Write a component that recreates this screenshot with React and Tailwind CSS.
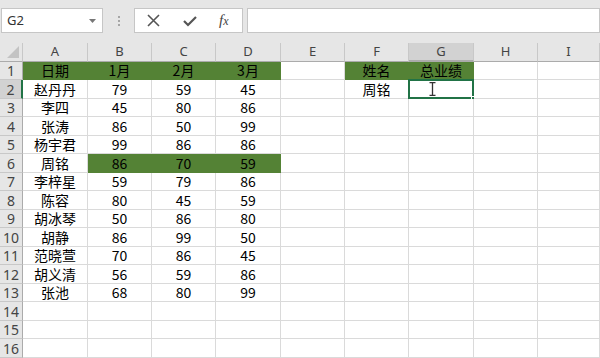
import React from 'react';

const cols = ['', 'A', 'B', 'C', 'D', 'E', 'F', 'G', 'H', 'I'];
const widths = ['w-[23px]', 'w-[65px]', 'w-[64px]', 'w-[64px]', 'w-[65px]', 'w-[64px]', 'w-[64px]', 'w-[65px]', 'w-[64px]', 'flex-1'];

const data = [
    ['日期', '1月', '2月', '3月', '', '姓名', '总业绩'],
    ['赵丹丹', '79', '59', '45', '', '周铭', ''],
    ['李四', '45', '80', '86'],
    ['张涛', '86', '50', '99'],
    ['杨宇君', '99', '86', '86'],
    ['周铭', '86', '70', '59'],
    ['李梓星', '59', '79', '86'],
    ['陈容', '80', '45', '59'],
    ['胡冰琴', '50', '86', '80'],
    ['胡静', '86', '99', '50'],
    ['范晓萱', '70', '86', '45'],
    ['胡义清', '56', '59', '86'],
    ['张池', '68', '80', '99'],
    [], [], [],
];

const isGreen = (r, c) =>
    (r === 0 && c >= 1 && c <= 4) ||
    (r === 0 && (c === 6 || c === 7)) ||
    (r === 5 && c >= 2 && c <= 4);

function Toolbar() {
    return (
        <div className="h-[43px] bg-[#e6e6e6] flex items-start pt-[8px]">
            <div className="w-[102px] h-[25px] bg-white border border-[#c6c6c6] ml-[1px] flex items-center justify-between px-[5px]">
                <span className="text-[13px] text-[#333] font-['Noto_Sans',sans-serif]">G2</span>
                <svg width="7" height="4" viewBox="0 0 7 4" className="mr-[1px]">
                    <path d="M0 0 L7 0 L3.5 4 Z" fill="#777" />
                </svg>
            </div>
            <div className="w-[31px] h-[25px] flex flex-col items-center justify-center gap-[2px]">
                <span className="w-[2px] h-[2px] bg-[#a6a6a6]" />
                <span className="w-[2px] h-[2px] bg-[#a6a6a6]" />
                <span className="w-[2px] h-[2px] bg-[#a6a6a6]" />
            </div>
            <div className="w-[109px] h-[25px] bg-white border border-[#c6c6c6] flex items-center">
                <svg width="13" height="13" viewBox="0 0 13 13" className="ml-[12px]">
                    <path d="M1 1 L12 12 M12 1 L1 12" stroke="#555" strokeWidth="1.6" />
                </svg>
                <svg width="14" height="12" viewBox="0 0 14 12" className="ml-[23px]">
                    <path d="M1 6 L5 10 L13 2" stroke="#555" strokeWidth="2.2" fill="none" />
                </svg>
                <span className="ml-[22px] text-[15px] italic text-[#444] font-['Liberation_Serif',serif] leading-none">
                    f<span className="text-[12px]">x</span>
                </span>
            </div>
            <div className="flex-1 h-[25px] bg-white border border-[#c6c6c6] ml-[4px]" />
        </div>
    );
}

function HeaderRow() {
    return (
        <div className="flex h-[19px] bg-[#e6e6e6]">
            {cols.map((c, i) => (
                <div
                    key={i}
                    className={`${widths[i]} relative flex items-center justify-center text-[13px] text-[#444] font-['Noto_Sans',sans-serif] border-r border-b border-r-[#c8c8c8] border-b-[#ababab] ${i === 7 ? 'bg-[#d2d2d2] border-b-2 border-b-[#217346]' : ''}`}
                >
                    {i === 0 ? (
                        <svg width="12" height="12" viewBox="0 0 12 12" className="absolute right-[3px] bottom-[3px]">
                            <path d="M12 0 L12 12 L0 12 Z" fill="#c3c3c3" />
                        </svg>
                    ) : (
                        c
                    )}
                </div>
            ))}
        </div>
    );
}

function Row({ r }) {
    const cells = data[r] || [];
    const h = r % 2 === 0 ? 'h-[18px]' : 'h-[19px]';
    return (
        <div className={`flex ${h}`}>
            {cols.map((_, i) => {
                if (i === 0) {
                    return (
                        <div
                            key={i}
                            className={`${widths[0]} flex items-center justify-center text-[14px] text-[#444] font-['Noto_Sans',sans-serif] border-b border-b-[#c8c8c8] ${r === 1 ? 'bg-[#d2d2d2] border-r-2 border-r-[#217346]' : 'bg-[#e6e6e6] border-r border-r-[#ababab]'}`}
                        >
                            {r + 1}
                        </div>
                    );
                }
                const green = isGreen(r, i);
                const selected = r === 1 && i === 7;
                return (
                    <div
                        key={i}
                        className={`${widths[i]} relative flex items-center justify-center text-[14px] text-black font-['Noto_Sans_CJK_SC',sans-serif] border-r border-b ${green ? 'bg-[#548235] border-[#548235]' : 'bg-white border-[#dadada]'}`}
                    >
                        {cells[i - 1] || ''}
                        {selected && (
                            <>
                                <div className="absolute -left-px -top-px -right-px -bottom-px border-2 border-[#217346]" />
                                <div className="absolute -right-[3px] -bottom-[3px] w-[5px] h-[5px] bg-[#217346] border border-white" />
                                <svg width="7" height="14" viewBox="0 0 7 14" className="absolute left-[20px] top-[2px]">
                                    <path d="M0.5 0.5 H6.5 M3.5 0.5 V13.5 M0.5 13.5 H6.5" stroke="#333" strokeWidth="1.3" fill="none" />
                                </svg>
                            </>
                        )}
                    </div>
                );
            })}
        </div>
    );
}

export default function App() {
    return (
        <div className="w-[600px] h-[358px] overflow-hidden bg-white">
            <Toolbar />
            <HeaderRow />
            {data.map((_, r) => (
                <Row key={r} r={r} />
            ))}
        </div>
    );
}
